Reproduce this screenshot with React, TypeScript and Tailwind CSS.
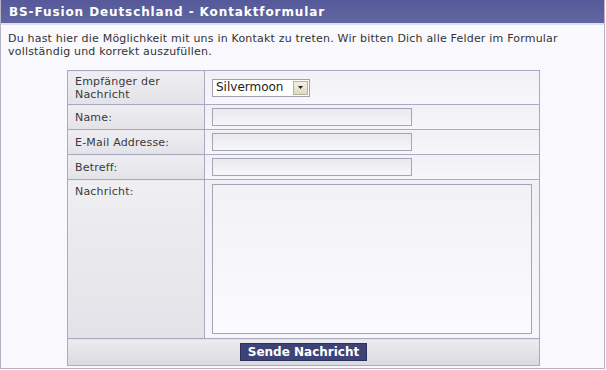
import React from 'react';

const labelCell =
  'border border-[#a9a9c0] bg-gradient-to-b from-[#efeff2] to-[#e2e2e8] px-[7px] align-top text-[#3a3a3a]';
const valueCell =
  'border border-[#a9a9c0] bg-gradient-to-b from-[#f0f0f5] to-[#f7f7fb] px-[7px] align-middle';

const TextField = () => (
  <div className="h-[18px] w-[200px] border border-[#a4a4b9] bg-gradient-to-b from-[#e9e9ee] to-[#f7f7fa]" />
);

const App = () => {
  return (
    <div
      className="w-[606px] h-[370px] bg-white"
      style={{ fontFamily: '"DejaVu Sans", Verdana, sans-serif' }}
    >
      <div className="w-[605px] h-[369px] border border-[#b4b4c4] border-t-0 bg-[#f9f9fd] flex flex-col">
        <div className="h-[23px] bg-gradient-to-b from-[#55599a] to-[#62669f] text-white font-bold text-[12px] tracking-[0.9px] pl-[8px] flex items-center">
          BS-Fusion Deutschland - Kontaktformular
        </div>
        <div className="h-[2px] bg-[#dcdff0]" />
        <p className="px-[7px] pt-[7px] text-[11px] leading-[13px] tracking-[0.2px] text-[#333]">
          Du hast hier die Möglichkeit mit uns in Kontakt zu treten. Wir bitten Dich alle Felder im Formular
          vollständig und korrekt auszufüllen.
        </p>
        <table className="ml-[66px] mt-[12px] w-[473px] border-collapse text-[11px] leading-[13px] tracking-[0.2px]">
          <tbody>
            <tr className="h-[34px]">
              <td className={`${labelCell} w-[138px] pt-[4px]`}>
                Empfänger der
                <br />
                Nachricht
              </td>
              <td className={valueCell}>
                <div className="flex h-[18px] w-[98px] items-center border border-[#a0a0b0] bg-white tracking-normal">
                  <span className="flex-1 pl-[3px] text-[12px] text-[#222]">Silvermoon</span>
                  <span className="mr-[1px] flex h-[14px] w-[15px] items-center justify-center border border-[#b8b49c] bg-gradient-to-b from-[#f4f1e2] to-[#dedac4]">
                    <svg width="5" height="3" viewBox="0 0 5 3">
                      <path d="M0 0h5L2.5 3z" fill="#222" />
                    </svg>
                  </span>
                </div>
              </td>
            </tr>
            <tr className="h-[25px]">
              <td className={`${labelCell} pt-[6px]`}>Name:</td>
              <td className={valueCell}>
                <TextField />
              </td>
            </tr>
            <tr className="h-[25px]">
              <td className={`${labelCell} pt-[6px]`}>E-Mail Addresse:</td>
              <td className={valueCell}>
                <TextField />
              </td>
            </tr>
            <tr className="h-[25px]">
              <td className={`${labelCell} pt-[6px]`}>Betreff:</td>
              <td className={valueCell}>
                <TextField />
              </td>
            </tr>
            <tr className="h-[159px]">
              <td className={`${labelCell} pt-[5px]`}>Nachricht:</td>
              <td className={`${valueCell} align-top pt-[4px]`}>
                <div className="h-[150px] w-[320px] border border-[#a4a4b9] bg-gradient-to-b from-[#f2f2f6] to-[#fbfbfd]" />
              </td>
            </tr>
            <tr className="h-[27px]">
              <td
                colSpan={2}
                className="border border-[#a9a9c0] bg-gradient-to-b from-[#ececf0] to-[#d9d9e0] text-center align-middle"
              >
                <button className="h-[18px] w-[127px] border border-[#2c305c] bg-[#3d4277] text-[12px] font-bold tracking-normal text-white">
                  Sende Nachricht
                </button>
              </td>
            </tr>
          </tbody>
        </table>
      </div>
    </div>
  );
};

export default App;
